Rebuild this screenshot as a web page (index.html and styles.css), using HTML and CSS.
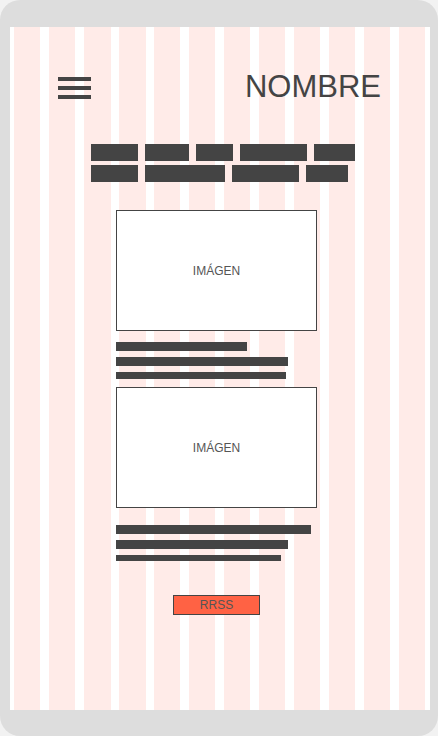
FILE: index.html
```html
<!DOCTYPE html>
<html lang="es">
<head>
<meta charset="utf-8">
<title>Wireframe</title>
<link rel="stylesheet" href="styles.css">
</head>
<body>
<div class="frame">
  <div class="screen">
    <header class="header">
      <div class="burger"><span></span><span></span><span></span></div>
      <div class="brand">NOMBRE</div>
    </header>
    <nav class="nav">
      <span class="blk w47"></span>
      <span class="blk w44"></span>
      <span class="blk w37"></span>
      <span class="blk w67"></span>
      <span class="blk w41"></span>
      <span class="blk w47"></span>
      <span class="blk w80"></span>
      <span class="blk w67"></span>
      <span class="blk w42"></span>
    </nav>
    <main class="col">
      <div class="img">IMÁGEN</div>
      <div class="lines first">
        <span class="ln l131"></span>
        <span class="ln l172"></span>
        <span class="ln thin7 l170"></span>
      </div>
      <div class="img second">IMÁGEN</div>
      <div class="lines second-lines">
        <span class="ln l195"></span>
        <span class="ln l172"></span>
        <span class="ln thin6 l165"></span>
      </div>
      <div class="btn">RRSS</div>
    </main>
  </div>
</div>
</body>
</html>
```
FILE: styles.css
```css
html, body {
  margin: 0;
  padding: 0;
  background: #f2f2f2;
}
body {
  font-family: "Liberation Sans", Arial, sans-serif;
  color: #444;
}
.frame {
  width: 438px;
  height: 736px;
  box-sizing: border-box;
  background: #dddddd;
  border-radius: 20px;
  padding: 27px 8px 26px 10px;
}
.screen {
  height: 683px;
  background:
    repeating-linear-gradient(90deg, #ffebe8 0 26.5px, #ffffff 26.5px 35px) 4px 0 / 411px 100% no-repeat,
    #ffffff;
  display: flex;
  flex-direction: column;
}
.header {
  margin-top: 42px;
  height: 36px;
  padding: 0 49px 0 48px;
  display: flex;
  justify-content: space-between;
  align-items: center;
}
.burger {
  display: flex;
  flex-direction: column;
  gap: 5px;
  width: 33px;
  margin-top: 2px;
}
.burger span {
  display: block;
  height: 4px;
  background: #444;
}
.brand {
  font-size: 31px;
  line-height: 36px;
  color: #444;
}
.nav {
  margin: 39px 0 0 81px;
  width: 264px;
  display: flex;
  flex-wrap: wrap;
  gap: 4px 7px;
}
.blk {
  display: block;
  height: 17px;
  background: #444;
}
.w37 { width: 37px; }
.w41 { width: 41px; }
.w42 { width: 42px; }
.w44 { width: 44px; }
.w47 { width: 47px; }
.w67 { width: 67px; }
.w80 { width: 80px; }
.col {
  margin: 28px 0 0 106px;
  width: 201px;
  display: flex;
  flex-direction: column;
}
.img {
  box-sizing: border-box;
  height: 121px;
  border: 1px solid #444;
  background: #fff;
  display: flex;
  align-items: center;
  justify-content: center;
  font-size: 12px;
  color: #555;
}
.img.second {
  margin-top: 8px;
}
.lines {
  display: flex;
  flex-direction: column;
  gap: 6px;
  margin-top: 11px;
}
.second-lines {
  margin-top: 17px;
}
.ln {
  display: block;
  height: 9px;
  background: #444;
}
.thin7 { height: 7px; }
.thin6 { height: 6px; }
.l131 { width: 131px; }
.l165 { width: 165px; }
.l170 { width: 170px; }
.l172 { width: 172px; }
.l195 { width: 195px; }
.btn {
  align-self: center;
  margin-top: 34px;
  box-sizing: border-box;
  width: 87px;
  height: 20px;
  border: 1px solid #444;
  background: #ff6244;
  font-size: 12px;
  line-height: 18px;
  text-align: center;
  color: #555;
}
```
